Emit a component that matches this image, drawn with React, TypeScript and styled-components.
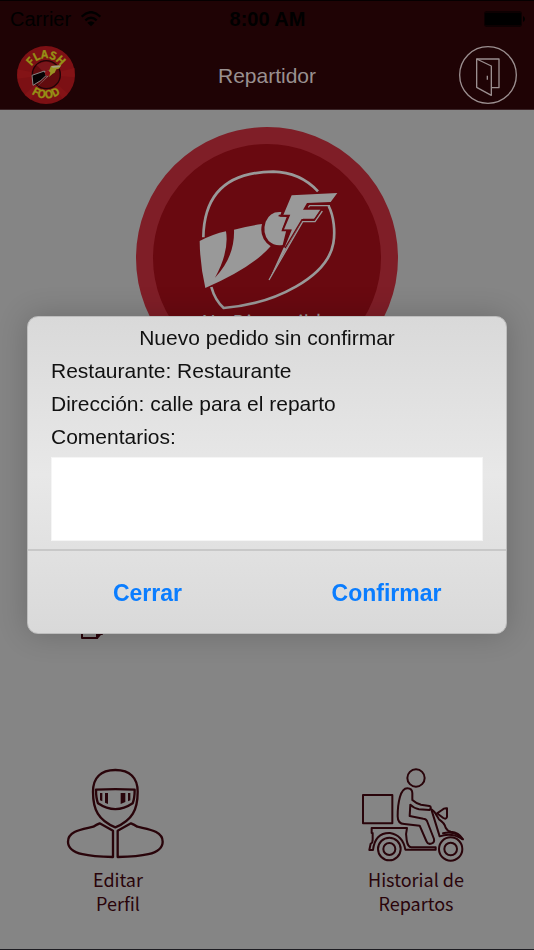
import React from "react";
import styled, { createGlobalStyle } from "styled-components";

const INK = "#29040a";
const PALE = "#999999";
const UI_FONT = '"Liberation Sans", Arial, sans-serif';
const LABEL_FONT = '"Noto Sans CJK SC", "Noto Sans", sans-serif';

const GlobalStyle = createGlobalStyle`
  *, *::before, *::after { box-sizing: border-box; }
  body { margin: 0; background: #858585; font-family: ${UI_FONT}; }
  button, textarea { font: inherit; }
`;

const Screen = styled.div`
  display: flex;
  flex-direction: column;
  min-height: 100vh;
  background: #858585;
  border-bottom: 1px solid #1d1c21;
`;

const Header = styled.header`
  background: #1f0305;
  border-top: 1px solid #050001;
  border-bottom: 1px solid #3a2427;
`;

const StatusBar = styled.div`
  display: grid;
  grid-template-columns: 1fr auto 1fr;
  align-items: center;
  height: 35px;
  padding: 0 9px 0 10px;
  color: #000;
  font-size: 20px;
  line-height: 24px;
`;

const Carrier = styled.div`
  display: flex;
  align-items: center;
  gap: 10px;
`;

const Clock = styled.span`
  font-weight: 700;
`;

const BatteryIcon = styled.svg`
  justify-self: end;
`;

const NavBar = styled.div`
  display: grid;
  grid-template-columns: 1fr auto 1fr;
  align-items: center;
  height: 73px;
  padding: 4px 17px 0;
`;

const Title = styled.h1`
  margin: 0;
  padding-top: 2px;
  color: #999090;
  font-size: 21px;
  font-weight: 400;
  line-height: 24px;
`;

const LogoArt = styled.svg`
  display: block;
  overflow: visible;
`;

const ExitButton = styled.button`
  justify-self: end;
  display: block;
  width: 58px;
  height: 58px;
  padding: 0;
  border: 0;
  border-radius: 50%;
  background: none;
`;

const Main = styled.main`
  flex: 1;
  display: flex;
  flex-direction: column;
  align-items: stretch;
  padding: 17px 18px 32px;
`;

const StatusButton = styled.button`
  align-self: center;
  display: flex;
  flex-direction: column;
  align-items: center;
  gap: 1px;
  width: 262px;
  height: 262px;
  padding: 0;
  border: 17px solid #7f1e27;
  border-radius: 50%;
  background: #690910;
  color: ${PALE};
  font-family: ${LABEL_FONT};
  font-size: 20px;
  line-height: 24px;
`;

const TileRow = styled.div<{ $space: number }>`
  display: grid;
  grid-template-columns: 1fr 1fr;
  gap: 98px;
  margin-top: ${(p) => p.$space}px;
`;

const Tile = styled.button`
  display: flex;
  flex-direction: column;
  align-items: center;
  gap: 4px;
  padding: 0;
  border: 0;
  background: none;
  color: ${INK};
  font-family: ${LABEL_FONT};
  font-size: 18px;
  line-height: 24px;
`;

const TileLabel = styled.span`
  max-width: 110px;
  text-align: center;
`;

const LineArt = styled.svg`
  display: block;
  overflow: visible;
  fill: none;
  stroke: currentColor;
  stroke-linecap: round;
  stroke-linejoin: round;
`;

const Overlay = styled.div`
  position: fixed;
  inset: 0;
  display: flex;
  align-items: center;
  justify-content: center;
  padding: 0 27px;
`;

const Dialog = styled.form`
  width: 100%;
  max-width: 600px;
  border: 1px solid #bdbdbd;
  border-radius: 11px;
  background: linear-gradient(#d9d9d9, #e8e8e8 50%, #d9d9d9);
  box-shadow: 0 0 30px rgba(0, 0, 0, 0.2);
  color: #111;
`;

const DialogBody = styled.div`
  padding: 4px 23px 8px;
  font-size: 21px;
  line-height: 33px;
`;

const DialogTitle = styled.h2`
  margin: 0;
  font-size: 21px;
  font-weight: 400;
  text-align: center;
`;

const Line = styled.p`
  margin: 0;
`;

const CommentLabel = styled.label`
  display: block;
  margin-bottom: 4px;
`;

const CommentBox = styled.textarea`
  display: block;
  width: 100%;
  height: 84px;
  padding: 8px;
  border: 1px solid #f5f5f5;
  border-radius: 0;
  background: #fff;
  outline: none;
  resize: none;
`;

const Actions = styled.div`
  display: grid;
  grid-template-columns: 1fr 1fr;
  border-top: 2px solid #c8c8c8;
`;

const ActionButton = styled.button`
  height: 82px;
  padding: 2px 0 0;
  border: 0;
  background: none;
  color: #0a7dff;
  font-size: 23px;
  font-weight: 700;
  line-height: 28px;
`;

const WifiIcon = () => (
  <svg width="20" height="16" viewBox="0 0 60 48" aria-hidden="true">
    <g fill="none" stroke="#000" strokeWidth="7">
      <path d="M2 17Q30 -10 58 17" />
      <path d="M13 28Q30 12 47 28" />
    </g>
    <path d="M19 35Q30 26 41 35L30 46Z" />
  </svg>
);

const Battery = () => (
  <BatteryIcon width="42" height="16" viewBox="0 0 42 16" aria-hidden="true">
    <rect x="1" y="0" width="38" height="16" rx="3" fill="#0d0102" />
    <rect x="2" y="2" width="36" height="12" rx="1" fill="#000" />
    <path d="M40 5Q42 6 42 8T40 11Z" />
  </BatteryIcon>
);

const Logo = () => (
  <LogoArt width="58" height="58" viewBox="21 18 174 174" role="img" aria-label="Flash Food">
    <circle cx="108" cy="105" r="87" fill="#7c1014" />
    <g fill="#8b1517" opacity="0.6">
      <path d="M108 105L22 88V116ZM108 105L194 84V112ZM108 105L44 164L62 179ZM108 105L174 161L158 176Z" />
    </g>
    <circle cx="109" cy="104" r="42" fill="#610b0e" stroke="#200407" strokeWidth="4" />
    <path d="M79 76Q111 53 138 79L107 107Q91 84 79 76Z" fill="#79151a" />
    <path d="M66 106L103 93L109 106Q96 122 69 136Z" fill="#050203" stroke="#8b8585" strokeWidth="3" />
    <path d="M106 94L121 91L116 108L78 144L110 111Z" fill="#8e7475" />
    <circle cx="113" cy="100" r="8" fill="#8a1115" />
    <path d="M123 78L154 76L147 86L139 88L134 98L128 101L117 111L121 98L117 92Z" fill="#9a9323" />
    <path d="M124 78L153 76L149 82L128 83Z" fill="#a39f83" />
    <path id="logo-top" d="M57 106A51 51 0 0 1 159 106" fill="none" />
    <path id="logo-bottom" d="M35 102A73 73 0 0 0 181 102" fill="none" />
    <g
      fill="#969016"
      stroke="#969016"
      strokeWidth="1"
      fontFamily={LABEL_FONT}
      fontSize="33"
      fontWeight="700"
      textAnchor="middle"
    >
      <text>
        <textPath href="#logo-top" startOffset="50%">FLASH</textPath>
      </text>
      <text>
        <textPath href="#logo-bottom" startOffset="50%">FOOD</textPath>
      </text>
    </g>
  </LogoArt>
);

const DoorIcon = () => (
  <svg width="58" height="58" viewBox="576 139 174 174" fill="none" stroke="#9b8f90" strokeWidth="4" strokeLinejoin="round" aria-hidden="true">
    <circle cx="663" cy="226" r="85" />
    <path d="M629 178H696V264H674" />
    <path d="M629 178L673 199V287L629 263Z" />
    <path d="M661 228V240" />
  </svg>
);

const HelmetLogo = () => (
  <LineArt width="228" height="165" viewBox="99 102 684 495" aria-hidden="true">
    <g stroke={PALE} strokeWidth="8" strokeLinecap="butt">
      <path d="M250 382C252 250 325 186 460 185C515 186 559 207 594 244" />
      <path d="M626 288C642 320 646 366 640 400C622 500 468 582 311 594C293 578 281 556 274 531" />
    </g>
    <g fill={PALE} stroke="none">
      <path d="M239 393Q280 372 318 364Q328 425 285 503Q345 440 342 359Q384 348 426 342Q416 383 452 409Q395 474 256 534Q240 465 239 393Z" />
      <path d="M484 306Q450 303 437 335Q426 368 446 393Q463 409 488 405L499 361H485L500 321L480 320Z" />
      <path d="M515 256L652 249L632 276L561 279L549 299H602L584 326H549L447 510L492 410L513 359H488L508 315L489 317Z" />
    </g>
    <path d="M492 410L512 361H488L507 317H478" stroke="#690910" strokeWidth="5" strokeLinejoin="miter" />
    <path d="M565 292L569 287H630M607 303L585 335H548L447 510" stroke={PALE} strokeWidth="4" strokeLinecap="butt" strokeLinejoin="miter" />
    <path d="M603 300L583 329H546L496 413" stroke="#690910" strokeWidth="4" strokeLinejoin="miter" />
  </LineArt>
);

const DocumentIcon = () => (
  <LineArt width="72" height="60" viewBox="0 0 72 60" strokeWidth="2" aria-hidden="true">
    <path d="M0 24H20V52L15 58H0Z" />
    <path d="M15 58V54H20" />
    <path d="M5 32H15M5 38H15M5 44H15" />
  </LineArt>
);

const RiderIcon = () => (
  <LineArt width="110" height="96" viewBox="39 51 330 288" strokeWidth="7" aria-hidden="true">
    <path d="M196 60C151 60 129 84 129 125C129 179 145 211 196 232C247 211 263 179 263 125C263 84 241 60 196 60Z" />
    <path d="M138 119Q196 116 254 119Q254 144 248 160Q196 195 144 160Q138 144 138 119Z" />
    <path d="M189 321V242L149 220Q139 224 130 230C99 238 54 242 54 275C54 315 124 320 189 321Z" />
    <path d="M203 321V242L243 220Q253 224 262 230C293 238 338 242 338 275C338 315 268 320 203 321Z" />
    <g fill="currentColor" stroke="none">
      <path d="M150 129H157V154L150 151ZM165 129H174V162L165 158ZM212 129H226V156L212 162ZM234 129H241V151L234 154Z" />
    </g>
  </LineArt>
);

const ScooterIcon = () => (
  <LineArt width="110" height="96" viewBox="33 51 330 288" strokeWidth="6" aria-hidden="true">
    <circle cx="198" cy="84" r="26" />
    <rect x="39" y="135" width="88" height="85" />
    <path d="M187 150V130C187 119 181 115 172 115C151 115 143 158 143 199C143 216 150 222 163 222L209 227L229 273C235 288 255 281 252 267L231 213Q228 206 220 206L179 198L181 164Q193 176 207 178L239 180Q246 170 238 168L213 164Q198 160 187 150Z" />
    <path d="M65 234H171Q166 252 170 270Q173 291 184 292H257V299H166Q158 255 120 249C89 248 73 266 69 300H58L62 281Q68 280 68 268V249H65Z" />
    <path d="M244 178L253 185L267 208Q283 218 287 233Q293 244 303 245Q326 246 339 268Q304 246 269 259Z" />
    <path d="M261 190L276 180Q282 174 291 175V201Q288 209 280 204L264 192Z" />
    <path d="M279 250Q313 240 337 267" />
    <circle cx="118" cy="297" r="34" />
    <circle cx="118" cy="297" r="18" />
    <circle cx="302" cy="297" r="35" />
    <circle cx="302" cy="297" r="19" />
  </LineArt>
);

export default function App() {
  return (
    <>
      <GlobalStyle />
      <Screen>
        <Header>
          <StatusBar>
            <Carrier>
              <span>Carrier</span>
              <WifiIcon />
            </Carrier>
            <Clock>8:00 AM</Clock>
            <Battery />
          </StatusBar>
          <NavBar>
            <Logo />
            <Title>Repartidor</Title>
            <ExitButton type="button" aria-label="Salir">
              <DoorIcon />
            </ExitButton>
          </NavBar>
        </Header>
        <Main>
          <StatusButton type="button">
            <HelmetLogo />
            <span>No Disponible</span>
          </StatusButton>
          <TileRow $space={191}>
            <Tile type="button" aria-label="Pedidos">
              <DocumentIcon />
            </Tile>
          </TileRow>
          <TileRow $space={127}>
            <Tile type="button">
              <RiderIcon />
              <TileLabel>
                Editar
                <br />
                Perfil
              </TileLabel>
            </Tile>
            <Tile type="button">
              <ScooterIcon />
              <TileLabel>
                Historial de
                <br />
                Repartos
              </TileLabel>
            </Tile>
          </TileRow>
        </Main>
      </Screen>
      <Overlay>
        <Dialog role="dialog" aria-modal="true" aria-labelledby="dialog-title" onSubmit={(e) => e.preventDefault()}>
          <DialogBody>
            <DialogTitle id="dialog-title">Nuevo pedido sin confirmar</DialogTitle>
            <Line>Restaurante: Restaurante</Line>
            <Line>Dirección: calle para el reparto</Line>
            <CommentLabel htmlFor="comments">Comentarios:</CommentLabel>
            <CommentBox id="comments" />
          </DialogBody>
          <Actions>
            <ActionButton type="button">Cerrar</ActionButton>
            <ActionButton type="submit">Confirmar</ActionButton>
          </Actions>
        </Dialog>
      </Overlay>
    </>
  );
}
